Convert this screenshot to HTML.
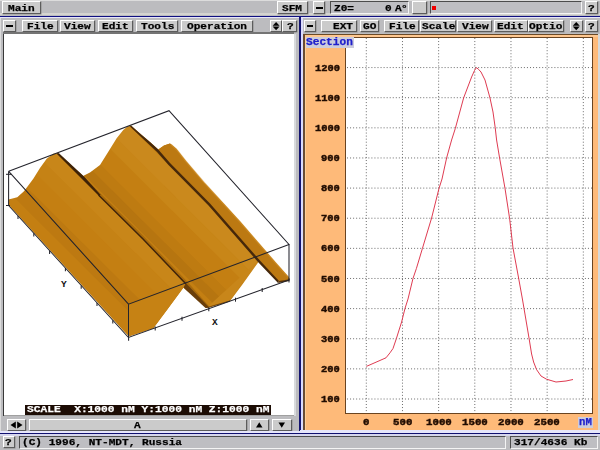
<!DOCTYPE html>
<html><head><meta charset="utf-8"><title>SFM</title>
<style>
html,body{margin:0;padding:0}
body{width:600px;height:450px;overflow:hidden;position:relative;background:#bcbcbf;font-family:"Liberation Mono",monospace}
div,span.t,svg.a{position:absolute;box-sizing:border-box}
.t{font-weight:bold;font-size:9.6px;line-height:9.6px;white-space:pre;transform-origin:0 0;will-change:transform}
.b{background:#cbcbcb;border:1px solid;border-color:#fff #5c5c5c #5c5c5c #fff;box-shadow:0.5px 0.5px 0 #8a8a8a}
.s{background:#bebec2;border:1px solid;border-color:#4c4c4c #f4f4f4 #f4f4f4 #4c4c4c}
</style></head><body>
<div class="" style="left:0px;top:0px;width:600px;height:15.5px;background:#bcbcbf"></div>
<div class="" style="left:0px;top:0px;width:600px;height:1px;background:#dcdcdc"></div>
<div class="" style="left:0px;top:12.9px;width:600px;height:1.8px;background:#d4d4d0"></div>
<div class="b" style="left:2px;top:1px;width:39px;height:12.5px;"></div>
<span class="t" style="left:7.54px;top:3.83px;color:#000;transform:scaleX(1.158);-webkit-text-stroke:0.25px #000;">Main</span>
<div class="b" style="left:277px;top:1px;width:31px;height:12.5px;"></div>
<span class="t" style="left:281.54px;top:3.83px;color:#000;transform:scaleX(1.158);-webkit-text-stroke:0.25px #000;">SFM</span>
<div class="b" style="left:313px;top:1px;width:12px;height:12.5px;"></div>
<div class="" style="left:316.4px;top:7px;width:6.6px;height:2px;background:#000"></div>
<div class="s" style="left:330px;top:1px;width:79px;height:12.5px;"></div>
<span class="t" style="left:333.54px;top:3.83px;color:#000;transform:scaleX(1.158);-webkit-text-stroke:0.25px #000;">Z0=</span>
<span class="t" style="left:385.14px;top:3.83px;color:#000;transform:scaleX(1.158);-webkit-text-stroke:0.25px #000;">0</span>
<span class="t" style="left:394.54px;top:3.83px;color:#000;transform:scaleX(1.158);-webkit-text-stroke:0.25px #000;">A</span>
<span class="t" style="left:401.04px;top:3.83px;color:#000;transform:scaleX(1.158);-webkit-text-stroke:0.25px #000;">°</span>
<div class="b" style="left:412px;top:1px;width:15px;height:12.5px;"></div>
<div class="s" style="left:430px;top:1px;width:151.5px;height:12.5px;"></div>
<div class="" style="left:432px;top:6px;width:4px;height:4px;background:#f00000"></div>
<div class="b" style="left:585px;top:1px;width:12.5px;height:12.5px;"></div>
<span class="t" style="left:588.04px;top:3.83px;color:#000;transform:scaleX(1.158);-webkit-text-stroke:0.25px #000;">?</span>
<div class="" style="left:0px;top:15.5px;width:600px;height:1.5px;background:#101080"></div>
<div class="" style="left:0px;top:17px;width:600px;height:1px;background:#e6e6fa"></div>
<div class="" style="left:0px;top:18px;width:600px;height:17px;background:#bcbcbf"></div>
<div class="b" style="left:3px;top:19.5px;width:12.5px;height:12.0px;"></div>
<div class="" style="left:6px;top:24.5px;width:7px;height:2.5px;background:#000"></div>
<div class="b" style="left:22px;top:19.5px;width:36px;height:12.0px;"></div>
<span class="t" style="left:26.54px;top:21.83px;color:#000;transform:scaleX(1.158);-webkit-text-stroke:0.25px #000;">File</span>
<div class="b" style="left:60px;top:19.5px;width:35px;height:12.0px;"></div>
<span class="t" style="left:63.54px;top:21.83px;color:#000;transform:scaleX(1.158);-webkit-text-stroke:0.25px #000;">View</span>
<div class="b" style="left:98px;top:19.5px;width:35px;height:12.0px;"></div>
<span class="t" style="left:101.54px;top:21.83px;color:#000;transform:scaleX(1.158);-webkit-text-stroke:0.25px #000;">Edit</span>
<div class="b" style="left:135.6px;top:19.5px;width:42.4px;height:12.0px;"></div>
<span class="t" style="left:140.54px;top:21.83px;color:#000;transform:scaleX(1.158);-webkit-text-stroke:0.25px #000;">Tools</span>
<div class="b" style="left:181px;top:19.5px;width:72px;height:12.0px;"></div>
<span class="t" style="left:186.54px;top:21.83px;color:#000;transform:scaleX(1.158);-webkit-text-stroke:0.25px #000;">Operation</span>
<div class="b" style="left:269.7px;top:19.5px;width:12.2px;height:12.0px;"></div>
<svg class="a" style="left:269.7px;top:19.5px" width="12.199999999999989" height="12" viewBox="0 0 12.199999999999989 12"><polygon points="2.599999999999966,5.75 9.599999999999966,5.75 6.099999999999966,2"/><polygon points="2.599999999999966,6.4 9.599999999999966,6.4 6.099999999999966,10.2"/></svg>
<div class="b" style="left:282.4px;top:19.5px;width:14.4px;height:12.0px;"></div>
<span class="t" style="left:286.74px;top:21.83px;color:#000;transform:scaleX(1.158);-webkit-text-stroke:0.25px #000;">?</span>
<div class="b" style="left:304px;top:19.5px;width:12px;height:12.0px;"></div>
<div class="" style="left:307px;top:24.7px;width:6px;height:2.3px;background:#000"></div>
<div class="b" style="left:321px;top:19.5px;width:35.5px;height:12.0px;"></div>
<span class="t" style="left:332.54px;top:21.83px;color:#000;transform:scaleX(1.158);-webkit-text-stroke:0.25px #000;">EXT</span>
<div class="b" style="left:360px;top:19.5px;width:19px;height:12.0px;"></div>
<span class="t" style="left:362.54px;top:21.83px;color:#000;transform:scaleX(1.158);-webkit-text-stroke:0.25px #000;">GO</span>
<div class="b" style="left:384px;top:19.5px;width:35px;height:12.0px;"></div>
<span class="t" style="left:388.54px;top:21.83px;color:#000;transform:scaleX(1.158);-webkit-text-stroke:0.25px #000;">File</span>
<div class="b" style="left:420px;top:19.5px;width:35.5px;height:12.0px;"></div>
<span class="t" style="left:421.54px;top:21.83px;color:#000;transform:scaleX(1.158);-webkit-text-stroke:0.25px #000;">Scale</span>
<div class="b" style="left:457px;top:19.5px;width:35px;height:12.0px;"></div>
<span class="t" style="left:461.54px;top:21.83px;color:#000;transform:scaleX(1.158);-webkit-text-stroke:0.25px #000;">View</span>
<div class="b" style="left:494px;top:19.5px;width:33.5px;height:12.0px;"></div>
<span class="t" style="left:496.54px;top:21.83px;color:#000;transform:scaleX(1.158);-webkit-text-stroke:0.25px #000;">Edit</span>
<div class="b" style="left:528px;top:19.5px;width:35.5px;height:12.0px;"></div>
<span class="t" style="left:529.14px;top:21.83px;color:#000;transform:scaleX(1.158);-webkit-text-stroke:0.25px #000;">Optio</span>
<div class="b" style="left:570px;top:19.5px;width:12.5px;height:12.0px;"></div>
<svg class="a" style="left:570px;top:19.5px" width="12.5" height="12" viewBox="0 0 12.5 12"><polygon points="2.75,5.75 9.75,5.75 6.25,2"/><polygon points="2.75,6.4 9.75,6.4 6.25,10.2"/></svg>
<div class="b" style="left:585px;top:19.5px;width:12.5px;height:12.0px;"></div>
<span class="t" style="left:588.04px;top:21.83px;color:#000;transform:scaleX(1.158);-webkit-text-stroke:0.25px #000;">?</span>
<div class="" style="left:0px;top:35px;width:299px;height:397px;background:#bcbcbf"></div>
<div class="" style="left:2.8px;top:32.4px;width:291.6px;height:383.3px;background:#747474"></div>
<div class="" style="left:294.4px;top:34.4px;width:1.6px;height:381.3px;background:#d8dadc"></div>
<div class="" style="left:2.8px;top:34px;width:1.2px;height:381.7px;background:#383838"></div>
<div class="" style="left:0px;top:18px;width:0.9px;height:414px;background:#dcdcdc"></div>
<div class="" style="left:3.9px;top:34.4px;width:290.5px;height:381.3px;background:#fff"></div>
<div class="" style="left:3.5px;top:415.2px;width:290.9px;height:0.7px;background:#a0a0a0"></div>
<svg class="a" style="left:0;top:0" width="300" height="420" viewBox="0 0 300 420">
<polygon fill="#c47f12" points="8.5,199.5 17.3,197.3 24,191.3 33.3,178.7 40,168 46.7,158.7 53.3,153.8 57.5,153 83,176 90,172.5 100,165 108.3,151.7 116.7,138.3 123.3,130 127.5,126.6 131,125.5 140,133.5 150,142 158.3,149.6 164,145.5 170,143.4 176,148.5 185,160 203.3,181.7 224,204 240,221.5 256,240 276,263 289,277.5 289.5,279.5 279,281.5 259.5,260.5 242,285 230,301 207.5,307.8 183.5,287.5 167,310 153.3,328.3 128.5,336.3 8.5,204.8"/>
<clipPath id="sc"><polygon points="8.5,199.5 17.3,197.3 24,191.3 33.3,178.7 40,168 46.7,158.7 53.3,153.8 57.5,153 83,176 90,172.5 100,165 108.3,151.7 116.7,138.3 123.3,130 127.5,126.6 131,125.5 140,133.5 150,142 158.3,149.6 164,145.5 170,143.4 176,148.5 185,160 203.3,181.7 224,204 240,221.5 256,240 276,263 289,277.5 289.5,279.5 279,281.5 259.5,260.5 242,285 230,301 207.5,307.8 183.5,287.5 167,310 153.3,328.3 128.5,336.3 8.5,204.8"/></clipPath>
<polygon clip-path="url(#sc)" fill="rgba(60,25,0,0.10)" points="17.1,108.6 244.0,334.2 250.3,327.8 23.4,102.2"/>
<polygon clip-path="url(#sc)" fill="rgba(60,25,0,0.04)" points="23.4,102.2 250.3,327.8 257.4,320.7 30.5,95.1"/>
<polygon clip-path="url(#sc)" fill="rgba(255,220,120,0.07)" points="43.2,82.3 270.0,307.9 278.5,299.4 51.6,73.8"/>
<polygon clip-path="url(#sc)" fill="rgba(255,220,120,0.11)" points="51.6,73.8 278.5,299.4 291.2,286.7 64.3,61.1"/>
<polygon clip-path="url(#sc)" fill="rgba(255,220,120,0.08)" points="3.7,122.0 230.6,347.6 241.1,337.0 14.3,111.4"/>
<polygon clip-path="url(#sc)" fill="rgba(255,220,120,0.03)" points="-6.2,132.0 220.7,357.6 230.6,347.6 3.7,122.0"/>
<polygon clip-path="url(#sc)" fill="rgba(60,25,0,0.05)" points="-28.8,154.7 198.1,380.3 209.4,368.9 -17.5,143.3"/>
<polygon fill="#c68214" points="128.5,304.2 185.5,283.5 183.5,287.5 153.3,328.3 128.5,336.5"/>
<polygon fill="#c8861a" points="259,260 230,300.5 207.5,307"/>
<polygon fill="#a86a0c" points="57.5,153 83,176 100,193 143,235.5 188.5,283 209,306 207.5,307.8 185.5,283.5 143,239 100,196.5"/>
<polygon fill="#bc7912" points="158.3,149.6 164,145.5 170,143.4 176,148.5 185,160 203.3,181.7 224,204 240,221.5 256,240 276,263 289,277.5 289.5,279.5 279,281.5 259.5,260.5 210,204 170,163.5"/>
<polyline fill="none" stroke="#d09028" stroke-width="1.6" stroke-opacity="0.6" points="171,144.5 177,150 186,161.5 204,182.5 224.5,205 240.5,222.5 256.5,241 276.5,264 288.5,277.5"/>
<polygon fill="#3e2206" points="57.5,153 59,153.2 84,176.6 100,194.3 100,197 57,154"/>
<g stroke="#40240a" fill="none" stroke-linecap="round" stroke-linejoin="round">
<polyline stroke-width="1.5" points="99,195.5 143,239 185.5,283.5"/>
</g>
<polygon fill="#6a3e0a" points="185.5,283.5 186.5,283.8 208.5,306.8 207.5,308 205.5,308 183.5,287.8"/>
<polygon fill="#46280a" points="131,125.5 140,133.5 150,142 158.3,149.6 170,163 210,203.5 259.5,260 279,281 278,283 258,262 208.5,205.5 168.5,165 157,152 140,136 130,126.5"/>
<polygon fill="#5a3408" points="278,283 279,281 289.5,279.2 289.5,281"/>
<polyline stroke="#7a4a0a" stroke-width="1.2" fill="none" points="207.5,307.5 230,301"/>
<g stroke="#24242c" stroke-width="1.05" fill="none">
<polyline points="8.7,171.3 169,110.7 289,244.5 128.5,304.2 8.7,171.3"/>
<line x1="8.6" y1="171.3" x2="8.6" y2="205.5"/>
<line x1="128.5" y1="304.2" x2="128.5" y2="337.5"/>
<line x1="289" y1="244.5" x2="289" y2="280"/>
<polyline points="8.6,205.5 128.5,337.5 289,280"/>
<line x1="18.0" y1="215.9" x2="18.0" y2="219.1"/>
<line x1="33.8" y1="233.3" x2="33.8" y2="236.5"/>
<line x1="49.6" y1="250.7" x2="49.6" y2="253.9"/>
<line x1="65.4" y1="268.1" x2="65.4" y2="271.3"/>
<line x1="81.2" y1="285.5" x2="81.2" y2="288.7"/>
<line x1="97.0" y1="302.9" x2="97.0" y2="306.1"/>
<line x1="112.8" y1="320.2" x2="112.8" y2="323.4"/>
<line x1="128.6" y1="337.6" x2="128.6" y2="340.8"/>
<line x1="155.2" y1="326.4" x2="155.2" y2="330.4"/>
<line x1="182.0" y1="316.8" x2="182.0" y2="320.8"/>
<line x1="208.8" y1="307.2" x2="208.8" y2="311.2"/>
<line x1="235.5" y1="297.7" x2="235.5" y2="301.7"/>
<line x1="262.2" y1="288.1" x2="262.2" y2="292.1"/>
<line x1="289.0" y1="278.5" x2="289.0" y2="282.5"/>
<line x1="6" y1="174.3" x2="11.5" y2="174.3"/><line x1="6" y1="205.5" x2="10" y2="205.5"/>
</g>
<g font-family="Liberation Mono, monospace" font-weight="bold" font-size="9.5" fill="#101010"><text x="61" y="286.5">Y</text><text x="212" y="325">X</text></g>
</svg>
<div class="" style="left:25px;top:404.5px;width:246px;height:10.5px;background:#1c0c04"></div>
<span class="t" style="left:26.53px;top:405.33px;color:#fff;transform:scaleX(1.170);-webkit-text-stroke:0.25px #fff;">SCALE  X:1000 nM Y:1000 nM Z:1000 nM</span>
<div class="b" style="left:7px;top:418.5px;width:19px;height:12.0px;"></div>
<svg class="a" style="left:7px;top:418.5px" width="19" height="12" viewBox="0 0 19 12"><polygon points="3.5,6 8.8,2.6 8.8,9.4"/><polygon points="15.5,6 10.2,2.6 10.2,9.4"/></svg>
<div class="b" style="left:29px;top:418.5px;width:218px;height:12.0px;"></div>
<span class="t" style="left:133.54px;top:421.13px;color:#000;transform:scaleX(1.158);-webkit-text-stroke:0.25px #000;">A</span>
<div class="b" style="left:250px;top:418.5px;width:18.5px;height:12.0px;"></div>
<svg class="a" style="left:250px;top:418.5px" width="18.5" height="12" viewBox="0 0 18.5 12"><polygon points="6,8.5 12.5,8.5 9.25,3.2"/></svg>
<div class="b" style="left:272px;top:418.5px;width:19.5px;height:12.0px;"></div>
<svg class="a" style="left:272px;top:418.5px" width="19.5" height="12" viewBox="0 0 19.5 12"><polygon points="6.5,3.5 13,3.5 9.75,8.8"/></svg>
<div class="" style="left:299px;top:17px;width:1.9px;height:417px;background:#141470"></div>
<div class="" style="left:300.9px;top:18px;width:2.0px;height:414px;background:#dcdcfc"></div>
<div class="" style="left:302.9px;top:34px;width:1.9px;height:396px;background:#6a4c34"></div>
<div class="" style="left:302.9px;top:34px;width:294.7px;height:1px;background:#6a4a28"></div>
<div class="" style="left:304.8px;top:35px;width:292.8px;height:394.5px;background:#feba79"></div>
<div class="" style="left:304.8px;top:35px;width:1.2px;height:394.5px;background:#ffd09a"></div>
<div class="" style="left:304.7px;top:35px;width:292.9px;height:1.7px;background:#ffc890"></div>
<div class="" style="left:597.6px;top:34px;width:2.4px;height:398px;background:#d8d8d8"></div>
<div class="" style="left:345.2px;top:36.7px;width:247.9px;height:377.0px;background:#6a4420"></div>
<div class="" style="left:346px;top:37.7px;width:246.1px;height:375.3px;background:#fff"></div>
<svg class="a" style="left:0;top:0" width="600" height="450" viewBox="0 0 600 450">
<g stroke="#6c6c6c" stroke-width="1" stroke-dasharray="1 2.05" fill="none">
<line x1="366.30" y1="38" x2="366.30" y2="413"/>
<line x1="402.47" y1="38" x2="402.47" y2="413"/>
<line x1="438.64" y1="38" x2="438.64" y2="413"/>
<line x1="474.81" y1="38" x2="474.81" y2="413"/>
<line x1="510.98" y1="38" x2="510.98" y2="413"/>
<line x1="547.15" y1="38" x2="547.15" y2="413"/>
<line x1="583.32" y1="38" x2="583.32" y2="413"/>
<line x1="347" y1="399.00" x2="592" y2="399.00"/>
<line x1="347" y1="368.87" x2="592" y2="368.87"/>
<line x1="347" y1="338.74" x2="592" y2="338.74"/>
<line x1="347" y1="308.61" x2="592" y2="308.61"/>
<line x1="347" y1="278.48" x2="592" y2="278.48"/>
<line x1="347" y1="248.35" x2="592" y2="248.35"/>
<line x1="347" y1="218.22" x2="592" y2="218.22"/>
<line x1="347" y1="188.09" x2="592" y2="188.09"/>
<line x1="347" y1="157.96" x2="592" y2="157.96"/>
<line x1="347" y1="127.83" x2="592" y2="127.83"/>
<line x1="347" y1="97.70" x2="592" y2="97.70"/>
<line x1="347" y1="67.57" x2="592" y2="67.57"/>
</g>
<polyline fill="none" stroke="#dc3048" stroke-width="0.95" stroke-linejoin="round" points="366.4,366.4 376,362.2 386,357.8 390,352.8 393,348.5 396.4,338.5 401.6,322 405,308.4 408,299 413,278.4 416.4,268.5 422.4,248.5 431.6,218 439,188.4 442,179 446.6,158 451.6,140 455.3,128.5 463.6,98 471.6,77 474.5,70.5 476.4,67.6 478.5,69.3 481,72 485,80 490,98 493,112 495.2,127.6 496.6,140 499.6,158 505,188.4 509.6,218.4 513,248 518.6,278 522.4,299 524,308.4 529,338 531.6,354 533.6,362 536.5,369.5 541,376 546.5,379.2 556,382 566,381 573,379.5"/>
</svg>
<span class="t" style="left:320.92px;top:395.11px;color:#200c00;font-size:9.8px;line-height:9.8px;transform:scaleX(1.063);-webkit-text-stroke:0.45px #200c00;">100</span>
<span class="t" style="left:320.92px;top:364.98px;color:#200c00;font-size:9.8px;line-height:9.8px;transform:scaleX(1.063);-webkit-text-stroke:0.45px #200c00;">200</span>
<span class="t" style="left:320.92px;top:334.85px;color:#200c00;font-size:9.8px;line-height:9.8px;transform:scaleX(1.063);-webkit-text-stroke:0.45px #200c00;">300</span>
<span class="t" style="left:320.92px;top:304.72px;color:#200c00;font-size:9.8px;line-height:9.8px;transform:scaleX(1.063);-webkit-text-stroke:0.45px #200c00;">400</span>
<span class="t" style="left:320.92px;top:274.59px;color:#200c00;font-size:9.8px;line-height:9.8px;transform:scaleX(1.063);-webkit-text-stroke:0.45px #200c00;">500</span>
<span class="t" style="left:320.92px;top:244.46px;color:#200c00;font-size:9.8px;line-height:9.8px;transform:scaleX(1.063);-webkit-text-stroke:0.45px #200c00;">600</span>
<span class="t" style="left:320.92px;top:214.33px;color:#200c00;font-size:9.8px;line-height:9.8px;transform:scaleX(1.063);-webkit-text-stroke:0.45px #200c00;">700</span>
<span class="t" style="left:320.92px;top:184.2px;color:#200c00;font-size:9.8px;line-height:9.8px;transform:scaleX(1.063);-webkit-text-stroke:0.45px #200c00;">800</span>
<span class="t" style="left:320.92px;top:154.07px;color:#200c00;font-size:9.8px;line-height:9.8px;transform:scaleX(1.063);-webkit-text-stroke:0.45px #200c00;">900</span>
<span class="t" style="left:314.67px;top:123.94px;color:#200c00;font-size:9.8px;line-height:9.8px;transform:scaleX(1.063);-webkit-text-stroke:0.45px #200c00;">1000</span>
<span class="t" style="left:314.67px;top:93.81px;color:#200c00;font-size:9.8px;line-height:9.8px;transform:scaleX(1.063);-webkit-text-stroke:0.45px #200c00;">1100</span>
<span class="t" style="left:314.67px;top:63.68px;color:#200c00;font-size:9.8px;line-height:9.8px;transform:scaleX(1.063);-webkit-text-stroke:0.45px #200c00;">1200</span>
<span class="t" style="left:362.84px;top:417.81px;color:#200c00;font-size:9.8px;line-height:9.8px;transform:scaleX(1.097);-webkit-text-stroke:0.45px #200c00;">0</span>
<span class="t" style="left:392.56px;top:417.81px;color:#200c00;font-size:9.8px;line-height:9.8px;transform:scaleX(1.097);-webkit-text-stroke:0.45px #200c00;">500</span>
<span class="t" style="left:425.5px;top:417.81px;color:#200c00;font-size:9.8px;line-height:9.8px;transform:scaleX(1.097);-webkit-text-stroke:0.45px #200c00;">1000</span>
<span class="t" style="left:461.67px;top:417.81px;color:#200c00;font-size:9.8px;line-height:9.8px;transform:scaleX(1.097);-webkit-text-stroke:0.45px #200c00;">1500</span>
<span class="t" style="left:497.84px;top:417.81px;color:#200c00;font-size:9.8px;line-height:9.8px;transform:scaleX(1.097);-webkit-text-stroke:0.45px #200c00;">2000</span>
<span class="t" style="left:534.01px;top:417.81px;color:#200c00;font-size:9.8px;line-height:9.8px;transform:scaleX(1.097);-webkit-text-stroke:0.45px #200c00;">2500</span>
<div class="" style="left:305.6px;top:37px;width:48.8px;height:11px;background:#ccccdc"></div>
<span class="t" style="left:306.16px;top:37.79px;color:#2020cc;font-size:10.2px;line-height:10.2px;transform:scaleX(1.095);-webkit-text-stroke:0.25px #2020cc;">Section</span>
<div class="" style="left:578px;top:417px;width:14.5px;height:11px;background:#ccccdc"></div>
<span class="t" style="left:579.08px;top:417.89px;color:#2020cc;font-size:10.2px;line-height:10.2px;transform:scaleX(1.046);-webkit-text-stroke:0.25px #2020cc;">nM</span>
<div class="" style="left:0px;top:430.6px;width:300px;height:2.1px;background:#e6e6fa"></div>
<div class="" style="left:300px;top:429.5px;width:300px;height:3.2px;background:#e6e6fa"></div>
<div class="" style="left:0px;top:432.6px;width:600px;height:1.5px;background:#101070"></div>
<div class="" style="left:0px;top:434.1px;width:600px;height:1.5px;background:#d6d6ec"></div>
<div class="" style="left:0px;top:435.6px;width:600px;height:14.4px;background:#bcbcbf"></div>
<div class="b" style="left:3px;top:436px;width:11.5px;height:11.5px;"></div>
<span class="t" style="left:5.04px;top:438.13px;color:#000;transform:scaleX(1.158);-webkit-text-stroke:0.25px #000;">?</span>
<div class="s" style="left:18.5px;top:435.7px;width:487.5px;height:12.9px;"></div>
<span class="t" style="left:21.54px;top:438.13px;color:#000;transform:scaleX(1.158);-webkit-text-stroke:0.25px #000;">(C) 1996, NT-MDT, Russia</span>
<div class="s" style="left:510px;top:435.7px;width:87.5px;height:12.9px;"></div>
<span class="t" style="left:513.54px;top:438.13px;color:#000;transform:scaleX(1.158);-webkit-text-stroke:0.25px #000;">317/4636 Kb</span>
</body></html>
